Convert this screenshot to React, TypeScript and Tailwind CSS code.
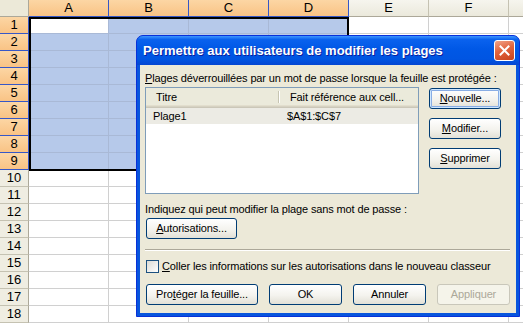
import React from 'react';

const COLS = ['A', 'B', 'C', 'D', 'E', 'F'];
const ROWS = Array.from({ length: 18 }, (_, i) => i + 1);

// selection A1:D9
const isSel = (r: number, c: number) => r <= 9 && c < 4;

function Sheet() {
  return (
    <div className="flex flex-col w-[523px] h-[323px] overflow-hidden bg-white font-['Liberation_Sans',Arial,sans-serif] text-[13px] text-black">
      <div className="flex h-[17px] shrink-0">
        <div className="w-[29px] shrink-0 border-r border-b border-[#ACA899] bg-[#ECE9D8]" />
        {COLS.map((c, i) => (
          <div
            key={c}
            className={
              i < 4
                ? 'w-[80px] shrink-0 flex items-center justify-center border-r border-b border-[#3657C7] bg-[linear-gradient(180deg,#FCD6A4,#F9C385)]'
                : 'w-[80px] shrink-0 flex items-center justify-center border-r border-b border-r-[#C5C2B2] border-b-[#ACA899] bg-[linear-gradient(180deg,#F6F5EE,#EBE9DC)]'
            }
          >
            {c}
          </div>
        ))}
        <div className="flex-1 border-b border-[#ACA899] bg-[linear-gradient(180deg,#F6F5EE,#EBE9DC)]" />
      </div>
      {ROWS.map((r) => (
        <div key={r} className="flex h-[17px] shrink-0">
          <div
            className={
              r <= 9
                ? 'w-[29px] shrink-0 flex items-center justify-center border-r border-b border-[#3657C7] bg-[linear-gradient(180deg,#FCD6A4,#F9C385)]'
                : 'w-[29px] shrink-0 flex items-center justify-center border-r border-b border-r-[#ACA899] border-b-[#C5C2B2] bg-[#EFEDE2]'
            }
          >
            {r}
          </div>
          {COLS.map((c, ci) => (
            <div
              key={c}
              className={
                r === 1 && ci === 0
                  ? 'w-[80px] shrink-0 border-r border-b border-[#A9B9D6] bg-white'
                  : isSel(r, ci)
                  ? 'w-[80px] shrink-0 border-r border-b border-[#A9B9D6] bg-[#B6C9EA]'
                  : 'w-[80px] shrink-0 border-r border-b border-[#D0D0D0]'
              }
            />
          ))}
          <div className="flex-1 border-b border-[#D0D0D0]" />
        </div>
      ))}
    </div>
  );
}

function XPButton({
  children,
  w,
  focused,
  disabled,
}: {
  children: React.ReactNode;
  w: string;
  focused?: boolean;
  disabled?: boolean;
}) {
  const base = 'h-[21px] shrink-0 flex items-center justify-center rounded-[3px] border text-[11px] leading-none';
  const look = disabled
    ? 'border-[#C9C7BA] bg-[#F5F4EA] text-[#ACA899]'
    : focused
    ? 'border-[#003C74] bg-[linear-gradient(180deg,#FFFFFF_0%,#F4F3EE_55%,#E2E0D6_100%)] shadow-[inset_0_0_0_1px_#CEE7FF,inset_0_0_0_2px_#89ADE4]'
    : 'border-[#003C74] bg-[linear-gradient(180deg,#FFFFFF_0%,#F4F3EE_55%,#E2E0D6_100%)]';
  return <div className={`${base} ${look} ${w}`}>{children}</div>;
}

function Dialog() {
  return (
    <div className="absolute left-[136px] top-[35px] w-[384px] h-[282px] flex flex-col rounded-t-[7px] border border-[#0831D9] bg-[#0855DD] font-['Liberation_Sans',Arial,sans-serif]">
      <div className="h-[29px] shrink-0 flex items-center justify-between pl-[6px] pr-[4px] rounded-t-[6px] bg-[linear-gradient(180deg,#3D95FF_0%,#0A62EE_12%,#0058E6_45%,#0055E2_80%,#0546D2_100%)]">
        <span className="text-white font-bold text-[13px] [text-shadow:1px_1px_0_#0A1FA0]">
          Permettre aux utilisateurs de modifier les plages
        </span>
        <div className="w-[21px] h-[21px] flex items-center justify-center rounded-[3px] border border-white bg-[linear-gradient(160deg,#F0A48A_0%,#E2643D_45%,#C8431E_100%)]">
          <svg width="11" height="11" viewBox="0 0 11 11">
            <path d="M1.5 1.5 L9.5 9.5 M9.5 1.5 L1.5 9.5" stroke="white" strokeWidth="2" strokeLinecap="square" />
          </svg>
        </div>
      </div>
      <div className="flex-1 mx-[3px] mb-[3px] bg-[#ECE9D8] flex flex-col pl-[5px] pr-[6px] pt-[6px] text-[11px] tracking-[-0.13px] text-black">
        <div className="h-[14px] leading-[14px]">
          <u>P</u>lages déverrouillées par un mot de passe lorsque la feuille est protégée :
        </div>
        <div className="flex mt-[2px]">
          <div className="w-[274px] h-[107px] shrink-0 border border-[#7F9DB9] bg-white flex flex-col">
            <div className="h-[20px] shrink-0 flex bg-[#EBEADB] shadow-[inset_0_-1px_0_#CBC7B8,inset_0_-2px_0_#D6D2C2,inset_0_-3px_0_#E2DECD]">
              <div className="w-[134px] shrink-0 flex items-center pl-[10px] pb-[2px] relative">
                Titre
                <div className="absolute right-0 top-[3px] bottom-[5px] w-[2px] border-l border-[#C7C5B2] border-r border-r-white" />
              </div>
              <div className="flex-1 flex items-center pl-[10px] pb-[2px]">Fait référence aux cell...</div>
            </div>
            <div className="h-[16px] shrink-0 flex items-center bg-[#ECEBE4]">
              <div className="w-[134px] shrink-0 pl-[7px]">Plage1</div>
              <div className="flex-1 pl-[7px]">$A$1:$C$7</div>
            </div>
          </div>
          <div className="flex flex-col gap-[9px] ml-[10px] mt-[1px]">
            <XPButton w="w-[72px]" focused>
              <span>
                <u>N</u>ouvelle...
              </span>
            </XPButton>
            <XPButton w="w-[72px]">
              <span>
                <u>M</u>odifier...
              </span>
            </XPButton>
            <XPButton w="w-[72px]">
              <span>
                <u>S</u>upprimer
              </span>
            </XPButton>
          </div>
        </div>
        <div className="h-[14px] leading-[14px] mt-[8px]">
          Indiquez qui peut modifier la plage sans mot de passe :
        </div>
        <div className="mt-[2px] ml-[1px]">
          <XPButton w="w-[91px]">
            <span>
              <u>A</u>utorisations...
            </span>
          </XPButton>
        </div>
        <div className="mt-[10px] h-[2px] border-t border-[#ACA899] border-b border-b-white" />
        <div className="mt-[9px] ml-[1px] flex items-center h-[13px]">
          <div className="w-[13px] h-[13px] shrink-0 border border-[#1C5180] bg-[linear-gradient(135deg,#DCDBD5,#FFFFFF)]" />
          <span className="ml-[3px]">
            <u>C</u>oller les informations sur les autorisations dans le nouveau classeur
          </span>
        </div>
        <div className="mt-[11px] ml-[1px] flex gap-[11px]">
          <XPButton w="w-[112px]">
            <span>
              Pro<u>t</u>éger la feuille...
            </span>
          </XPButton>
          <XPButton w="w-[73px]">OK</XPButton>
          <XPButton w="w-[73px]">Annuler</XPButton>
          <XPButton w="w-[73px]" disabled>
            Appliquer
          </XPButton>
        </div>
      </div>
    </div>
  );
}

export default function App() {
  return (
    <div className="relative w-[523px] h-[323px] overflow-hidden">
      <Sheet />
      {/* selection outline A1:D9 */}
      <div className="absolute left-[29px] top-[17px] w-[320px] h-[154px] border-2 border-black pointer-events-none" />
      <Dialog />
    </div>
  );
}
